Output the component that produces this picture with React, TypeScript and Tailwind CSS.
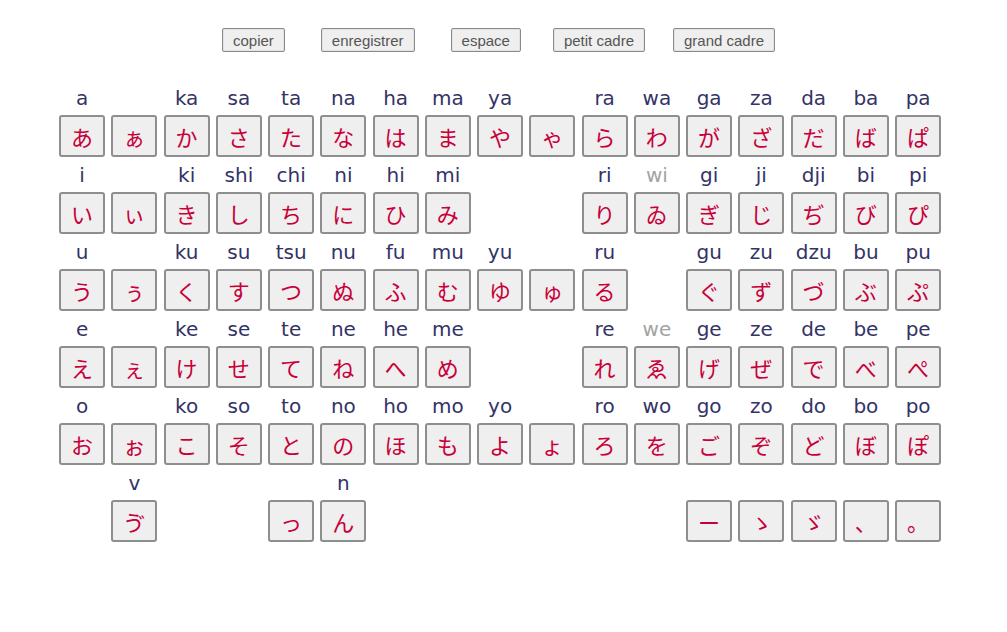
const rows: { labels: string[]; kana: string[] }[] = [
  {
    labels: ['a', '', 'ka', 'sa', 'ta', 'na', 'ha', 'ma', 'ya', '', 'ra', 'wa', 'ga', 'za', 'da', 'ba', 'pa'],
    kana: ['あ', 'ぁ', 'か', 'さ', 'た', 'な', 'は', 'ま', 'や', 'ゃ', 'ら', 'わ', 'が', 'ざ', 'だ', 'ば', 'ぱ'],
  },
  {
    labels: ['i', '', 'ki', 'shi', 'chi', 'ni', 'hi', 'mi', '', '', 'ri', '*wi', 'gi', 'ji', 'dji', 'bi', 'pi'],
    kana: ['い', 'ぃ', 'き', 'し', 'ち', 'に', 'ひ', 'み', '', '', 'り', 'ゐ', 'ぎ', 'じ', 'ぢ', 'び', 'ぴ'],
  },
  {
    labels: ['u', '', 'ku', 'su', 'tsu', 'nu', 'fu', 'mu', 'yu', '', 'ru', '', 'gu', 'zu', 'dzu', 'bu', 'pu'],
    kana: ['う', 'ぅ', 'く', 'す', 'つ', 'ぬ', 'ふ', 'む', 'ゆ', 'ゅ', 'る', '', 'ぐ', 'ず', 'づ', 'ぶ', 'ぷ'],
  },
  {
    labels: ['e', '', 'ke', 'se', 'te', 'ne', 'he', 'me', '', '', 're', '*we', 'ge', 'ze', 'de', 'be', 'pe'],
    kana: ['え', 'ぇ', 'け', 'せ', 'て', 'ね', 'へ', 'め', '', '', 'れ', 'ゑ', 'げ', 'ぜ', 'で', 'べ', 'ぺ'],
  },
  {
    labels: ['o', '', 'ko', 'so', 'to', 'no', 'ho', 'mo', 'yo', '', 'ro', 'wo', 'go', 'zo', 'do', 'bo', 'po'],
    kana: ['お', 'ぉ', 'こ', 'そ', 'と', 'の', 'ほ', 'も', 'よ', 'ょ', 'ろ', 'を', 'ご', 'ぞ', 'ど', 'ぼ', 'ぽ'],
  },
  {
    labels: ['', 'v', '', '', '', 'n', '', '', '', '', '', '', '', '', '', '', ''],
    kana: ['', 'ゔ', '', '', 'っ', 'ん', '', '', '', '', '', '', 'ー', 'ゝ', 'ゞ', '、', '。'],
  },
];

const tools = [
  { label: 'copier', ml: 'ml-0' },
  { label: 'enregistrer', ml: 'ml-[36px]' },
  { label: 'espace', ml: 'ml-[36px]' },
  { label: 'petit cadre', ml: 'ml-[32px]' },
  { label: 'grand cadre', ml: 'ml-[28px]' },
];

const KanaKey = ({ char }: { char: string }) => (
  <button className="mx-[3px] h-[42px] w-[46px] rounded-[3px] border-2 border-[#8e8e8e] bg-[#efefef] text-[22px] leading-none text-[#c8003a] [font-family:'Noto_Sans_CJK_JP',sans-serif]">
    {char}
  </button>
);

export default function App() {
  return (
    <div className="min-h-[632px] w-[1007px] bg-white">
      <div className="flex pl-[222px] pt-[28px]">
        {tools.map((t) => (
          <button
            key={t.label}
            className={`${t.ml} h-[24px] rounded-[2px] border border-[#8a8a8a] bg-[#efefef] px-[10px] text-[15px] leading-none text-[#555] shadow-[inset_0_0_0_1px_#e2e2e2] [font-family:'Liberation_Sans',Arial,sans-serif]`}
          >
            {t.label}
          </button>
        ))}
      </div>

      <div className="mt-[33px] flex flex-col gap-[5px] pl-[56px]">
        {rows.map((row, r) => (
          <div key={r} className="flex flex-col">
            <div className="grid h-[30px] grid-cols-[repeat(17,52.25px)]">
              {row.labels.map((l, i) => (
                <div
                  key={i}
                  className={`text-center text-[20px] leading-[26px] [font-family:'DejaVu_Sans',Verdana,sans-serif] ${
                    l.startsWith('*') ? 'text-[#a3a3a3]' : 'text-[#333366]'
                  }`}
                >
                  {l.replace('*', '')}
                </div>
              ))}
            </div>
            <div className="grid h-[42px] grid-cols-[repeat(17,52.25px)]">
              {row.kana.map((k, i) => (
                <div key={i}>{k ? <KanaKey char={k} /> : null}</div>
              ))}
            </div>
          </div>
        ))}
      </div>
    </div>
  );
}
